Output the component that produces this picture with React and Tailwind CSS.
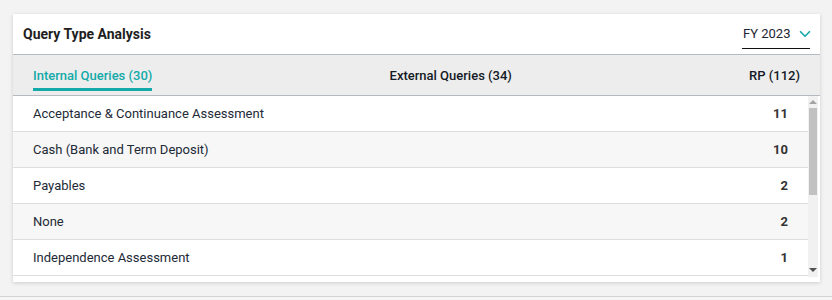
import { ChevronDown } from "lucide-react";

const rows = [
  { name: "Acceptance & Continuance Assessment", count: 11 },
  { name: "Cash (Bank and Term Deposit)", count: 10 },
  { name: "Payables", count: 2 },
  { name: "None", count: 2 },
  { name: "Independence Assessment", count: 1 },
];

const tabs = [
  { label: "Internal Queries (30)", active: true },
  { label: "External Queries (34)" },
  { label: "RP (112)" },
];

function FakeScrollbar() {
  return (
    <div className="w-[10px] bg-[#f1f1f1] flex flex-col items-center">
      <div className="h-[12px] flex items-center justify-center">
        <div className="w-0 h-0 border-l-[4px] border-r-[4px] border-b-[4px] border-l-transparent border-r-transparent border-b-[#a3a3a3]" />
      </div>
      <div className="w-[8px] h-[87px] bg-[#c1c1c1]" />
      <div className="flex-1" />
      <div className="h-[14px] flex items-center justify-center">
        <div className="w-0 h-0 border-l-[4px] border-r-[4px] border-t-[4px] border-l-transparent border-r-transparent border-t-[#505050]" />
      </div>
    </div>
  );
}

export default function App() {
  return (
    <div
      className="w-[832px] h-[300px] bg-[#f5f5f5]"
      style={{ fontFamily: "Roboto, 'Liberation Sans', sans-serif" }}
    >
      <div className="h-[297px] bg-[#f3f3f3] border-b border-[#d4d4d4] pt-[14px] pl-[13px] pr-[12px]">
        <div className="bg-white shadow-[0_1px_4px_rgba(0,0,0,0.16)] pb-[5px]">
          {/* header */}
          <div className="h-[40px] flex items-center justify-between px-[10px]">
            <div className="text-[14px] font-bold text-[#1e1e1e]">Query Type Analysis</div>
            <div className="w-[68px] flex items-center justify-between border-b-[1.5px] border-[#111] pb-[4px] pt-[5px] pl-[1px]">
              <span className="text-[13px] text-[#1e2533]">FY 2023</span>
              <ChevronDown size={18} strokeWidth={2.2} className="text-[#13aaa9] -mr-[4px] -my-[2px]" />
            </div>
          </div>

          {/* tabs */}
          <div className="h-[42px] bg-[#ededed] border-y border-[#b5b9c2] flex items-center justify-between px-5">
            {tabs.map((t) =>
              t.active ? (
                <div key={t.label} className="h-full flex flex-col justify-end pb-[4px]">
                  <span className="text-[13px] font-medium text-[#13aaa9] leading-[16px]">{t.label}</span>
                  <div className="h-[3px] bg-[#13aaa9] mt-[4px]" />
                </div>
              ) : (
                <span key={t.label} className="text-[13px] font-medium text-[#141a26] pt-[1px]">
                  {t.label}
                </span>
              )
            )}
          </div>

          {/* rows */}
          <div className="flex h-[181px]">
            <div className="flex-1 flex flex-col">
              {rows.map((r, i) => (
                <div
                  key={r.name}
                  className={`h-[36px] shrink-0 flex items-center justify-between px-5 border-b border-[#dedede] ${
                    i % 2 === 1 ? "bg-[#f7f7f7]" : "bg-white"
                  }`}
                >
                  <span className="text-[13px] text-[#222a36]">{r.name}</span>
                  <span className="text-[13px] font-bold text-[#333]">{r.count}</span>
                </div>
              ))}
            </div>
            <FakeScrollbar />
            <div className="w-[2px]" />
          </div>
        </div>
      </div>
    </div>
  );
}
